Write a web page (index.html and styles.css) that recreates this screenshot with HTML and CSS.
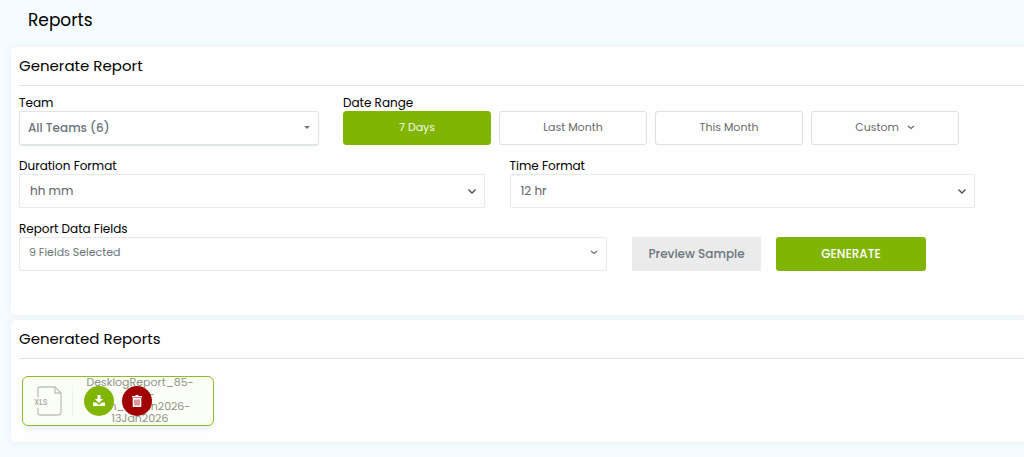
FILE: index.html
```html
<!DOCTYPE html>
<html lang="en">
<head>
<meta charset="utf-8">
<title>Reports</title>
<meta name="viewport" content="width=device-width, initial-scale=1">
<link rel="stylesheet" href="styles.css">
</head>
<body>
<header class="page-header"><h1 class="page-title">Reports</h1></header>
<main class="page">
  <section class="card card-form">
    <h2 class="card-title">Generate Report</h2>
    <form class="form">
      <div class="row row-range">
        <div class="field">
          <label class="label" for="team">Team</label>
          <div class="select-box">
            <select class="select select-team" id="team"><option>All Teams (6)</option></select>
            <svg class="caret" viewBox="0 0 6 3" width="6" height="3" aria-hidden="true"><path d="M0 0h6L3 3z" fill="currentColor"/></svg>
          </div>
        </div>
        <div class="field" role="group" aria-labelledby="range">
          <span class="label" id="range">Date Range</span>
          <div class="ranges">
            <button type="button" class="range range-active">7 Days</button>
            <button type="button" class="range">Last Month</button>
            <button type="button" class="range">This Month</button>
            <button type="button" class="range">Custom
              <svg viewBox="0 0 8 5" width="8" height="5" aria-hidden="true"><path d="M1 1l3 2.500L7 1" fill="none" stroke="currentColor" stroke-width="1.300"/></svg>
            </button>
          </div>
        </div>
      </div>
      <div class="row row-formats">
        <div class="field">
          <label class="label" for="duration">Duration Format</label>
          <div class="select-box">
            <select class="select" id="duration"><option>hh mm</option></select>
            <svg class="caret caret-large" viewBox="0 0 8 5" width="8" height="5" aria-hidden="true"><path d="M.5.5L4 4 7.500.5" fill="none" stroke="currentColor" stroke-width="1.300"/></svg>
          </div>
        </div>
        <div class="field">
          <label class="label" for="time">Time Format</label>
          <div class="select-box">
            <select class="select" id="time"><option>12 hr</option></select>
            <svg class="caret caret-large" viewBox="0 0 8 5" width="8" height="5" aria-hidden="true"><path d="M.5.5L4 4 7.500.5" fill="none" stroke="currentColor" stroke-width="1.300"/></svg>
          </div>
        </div>
      </div>
      <div class="row row-actions">
        <div class="field">
          <label class="label" for="fields">Report Data Fields</label>
          <div class="select-box">
            <select class="select select-fields" id="fields"><option>9 Fields Selected</option></select>
            <svg class="caret caret-fields" viewBox="0 0 8 5" width="8" height="5" aria-hidden="true"><path d="M1 1l3 2.500L7 1" fill="none" stroke="currentColor" stroke-width="1.300"/></svg>
          </div>
        </div>
        <button type="button" class="preview">Preview Sample</button>
        <button type="submit" class="generate">GENERATE</button>
      </div>
    </form>
  </section>
  <section class="card card-reports">
    <h2 class="card-title">Generated Reports</h2>
    <article class="report">
      <div class="report-icon">
        <svg viewBox="0 0 28 30" width="28" height="30" role="img" aria-label="XLS file">
          <path d="M4 11V3a2 2 0 0 1 2-2h15l6 6v19a3 3 0 0 1-3 3H6a2 2 0 0 1-2-2v-5M21 1v6h6" fill="none" stroke="#bfc2bd" stroke-width="1.300"/>
          <text x="0" y="19" class="xls">XLS</text>
        </svg>
      </div>
      <p class="report-name">DesklogReport_85-<br>Trial-<br>John_07Jan2026-<br>13Jan2026</p>
      <div class="report-actions">
        <button type="button" class="round download" aria-label="Download">
          <svg viewBox="0 0 12 12" width="12" height="12"><path d="M4.500 0h3v4h2.700L6 8 1.800 4h2.700zM0 7.500h3.200L6 10l2.800-2.500H12V11H0z" fill="#fff"/></svg>
        </button>
        <button type="button" class="round delete" aria-label="Delete">
          <svg viewBox="0 0 10 12" width="10" height="12"><path d="M0 1h3l1-1h2l1 1h3v1.500H0zM.7 3h8.600v8a1 1 0 0 1-1 1H1.700a1 1 0 0 1-1-1z" fill="#fff"/><path d="M3 4.500v6M5 4.500v6M7 4.500v6" stroke="#a00000" stroke-width=".8"/></svg>
        </button>
      </div>
    </article>
  </section>
</main>
</body>
</html>
```
FILE: styles.css
```css
* { box-sizing: border-box; }
body {
  margin: 0;
  min-height: 100vh;
  background: #f4fcff;
  color: #000;
  font-family: Poppins, Inter, "Noto Sans", sans-serif;
  font-size: 12px;
}
button, select { font: inherit; color: inherit; }
svg { display: block; }
.page-header { padding: 8px 28px 15px; }
.page-title { margin: 0; font-size: 17px; line-height: 24px; font-weight: 400; }
.page { display: flex; flex-direction: column; gap: 5px; padding-left: 11px; }
.card {
  padding: 7px 0 0 8px;
  background: #fefefe;
  border-radius: 5px 0 0 5px;
  box-shadow: 0 0 6px 2px #eef4f7;
}
.card-form { padding-bottom: 44px; }
.card-reports { padding-bottom: 16px; }
.card-title {
  margin: 0 0 9px;
  padding-bottom: 8px;
  border-bottom: 1px solid #e0e4e6;
  font-size: 15px;
  line-height: 23px;
  font-weight: 400;
}
.form { display: flex; flex-direction: column; gap: 13px; margin-right: 49px; }
.row { display: grid; }
.row-range { grid-template-columns: 300fr 616fr; column-gap: 24px; margin-right: 16px; }
.row-formats { grid-template-columns: 1fr 1fr; column-gap: 25px; }
.row-actions { display: flex; align-items: flex-end; margin-right: 49px; }
.row-actions .field { flex: 1; margin-right: 25px; }
.field { display: flex; flex-direction: column; }
.label { height: 16px; line-height: 16px; }
.select-box { position: relative; }
.select {
  display: block;
  width: 100%;
  height: 34px;
  padding: 0 24px 2px 10px;
  border: 1px solid #e7eaec;
  border-radius: 2px;
  background: #fefefe;
  color: #60656a;
  appearance: none;
}
.select-team {
  padding-left: 8px;
  border-color: #dfe5e7;
  border-radius: 3px;
  box-shadow: 0 1px 1px #dfe5e7;
  color: #6c757d;
  font-weight: 500;
}
.select-fields { padding-left: 9px; padding-bottom: 4px; font-size: 11px; color: #6c757d; }
.caret { position: absolute; right: 9px; top: 15px; color: #6c757d; pointer-events: none; }
.caret-large { color: #444a50; }
.caret-fields { top: 13px; }
.ranges { display: grid; grid-template-columns: repeat(4, 1fr); gap: 8px; }
.range {
  display: flex;
  align-items: center;
  justify-content: center;
  gap: 8px;
  height: 34px;
  padding: 0 0 2px;
  border: 1px solid #dddfe2;
  border-radius: 3px;
  background: #fefefe;
  color: #65696d;
  font-size: 11px;
}
.range-active { background: #81b504; border-color: #81b504; color: #f5fbe6; }
.preview, .generate { height: 34px; padding: 0; border: 0; font-weight: 500; }
.preview { width: 129px; margin-right: 15px; background: #ebebeb; color: #6c757d; border-radius: 1px; }
.generate { width: 150px; background: #81b504; color: #fff; border-radius: 3px; }
.report {
  position: relative;
  display: flex;
  align-items: center;
  width: 192px;
  height: 50px;
  margin: 17px 0 0 3px;
  border: 1px solid #8dbd25;
  border-radius: 6px;
  background: #fbfef4;
  box-shadow: 0 4px 4px #eef3f6;
}
.report-icon { padding: 0 10px 0 11px; border-right: 1px solid #f0f3ec; }
.xls { font-size: 8px; font-weight: 500; fill: #a0a49e; }
.report-name { flex: 1; margin: 0 6px 2px 0; font-size: 11px; line-height: 12px; text-align: center; color: #8f928d; }
.report-actions { position: absolute; left: 61px; top: 9px; display: flex; gap: 8px; }
.round {
  display: grid;
  place-items: center;
  width: 30px;
  height: 30px;
  padding: 0;
  border: 0;
  border-radius: 50%;
}
.download { background: #81b504; }
.delete { background: #a00000; }
```
